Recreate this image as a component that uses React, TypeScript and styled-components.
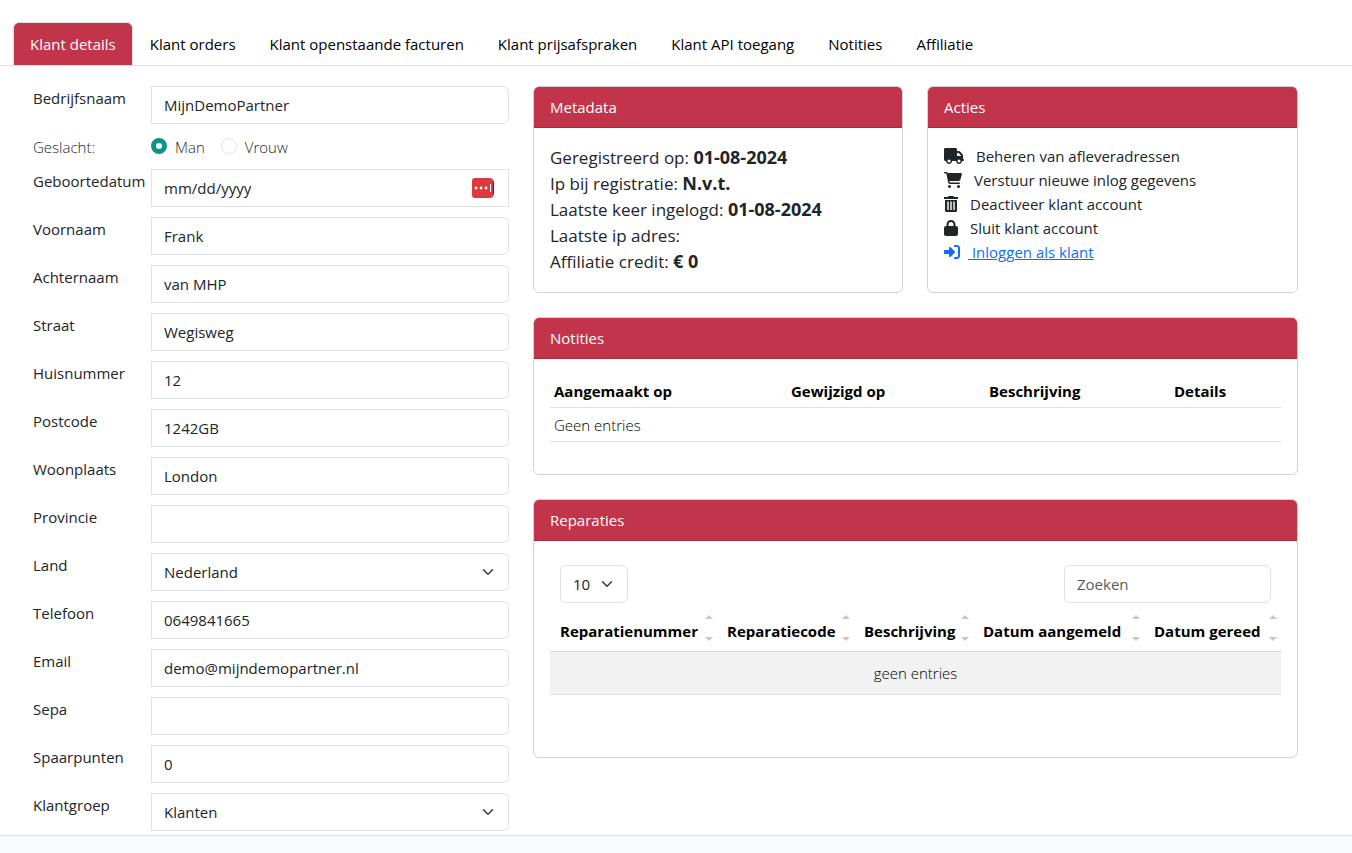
import React from "react";
import styled, { createGlobalStyle } from "styled-components";
import { FaTruck, FaCartShopping, FaLock, FaRightToBracket } from "react-icons/fa6";

const red = "#c23449";
const line = "#dee2e6";
const ink = "#212529";

const GlobalStyle = createGlobalStyle`
  *, *::before, *::after { box-sizing: border-box; }
  body {
    margin: 0;
    background: #fff;
    color: ${ink};
    font-family: "Segoe UI", "Open Sans", "Noto Sans", sans-serif;
    font-size: 15px;
    line-height: 24px;
  }
  input, select, button { font: inherit; color: inherit; }
`;

const Page = styled.div`
  display: flex;
  flex-direction: column;
  min-height: 100vh;
`;

const Tabs = styled.nav`
  display: flex;
  margin-top: 22px;
  padding-left: 13px;
  border-bottom: 1px solid ${line};
`;

const Tab = styled.button<{ $active?: boolean }>`
  height: 43px;
  padding: 0 16px 1px;
  border: 1px solid ${(p) => (p.$active ? line : "transparent")};
  border-bottom: 0;
  border-radius: 6px 6px 0 0;
  background: ${(p) => (p.$active ? red : "transparent")};
  color: ${(p) => (p.$active ? "#fff" : "#000")};
  white-space: nowrap;
  cursor: pointer;
`;

const Main = styled.main`
  display: grid;
  grid-template-columns: minmax(0, 476fr) minmax(0, 765fr);
  column-gap: 24px;
  padding: 20px 54px 4px 33px;
`;

const Form = styled.form`
  display: flex;
  flex-direction: column;
  gap: 10px;
`;

const Field = styled.div`
  display: grid;
  grid-template-columns: 118px minmax(0, 1fr);
  align-items: start;
`;

const RadioField = styled.fieldset`
  display: grid;
  grid-template-columns: 118px minmax(0, 1fr);
  margin: 0;
  padding: 1px 0 0;
  border: 0;
  font-weight: 300;
`;

const Control = styled.input<{ $square?: boolean }>`
  width: 100%;
  height: 38px;
  padding: 0 12px;
  border: 1px solid ${line};
  border-radius: ${(p) => (p.$square ? "0" : "0 6px 6px 0")};
  background: #fff;
  outline: 0;
  &::placeholder { color: ${ink}; opacity: 1; }
`;

const SelectWrap = styled.div`
  position: relative;
`;

const Select = styled.select<{ $rounded?: boolean }>`
  display: block;
  width: 100%;
  height: 38px;
  padding: 0 36px 0 12px;
  border: 1px solid ${line};
  border-radius: ${(p) => (p.$rounded ? "6px" : "0 6px 6px 0")};
  background: #fff;
  appearance: none;
`;

const Chevron = styled.svg`
  position: absolute;
  top: 13px;
  right: 15px;
  width: 12px;
  height: 12px;
  pointer-events: none;
`;

const Badge = styled.svg`
  position: absolute;
  top: 8px;
  right: 14px;
  width: 24px;
  height: 22px;
`;

const RadioGroup = styled.div`
  display: flex;
  gap: 16px;
`;

const RadioLabel = styled.label`
  display: flex;
  align-items: center;
  gap: 8px;
`;

const Radio = styled.input`
  appearance: none;
  width: 16px;
  height: 16px;
  margin: 0 0 2px;
  border: 1px solid ${line};
  border-radius: 50%;
  background: #fff;
  &:checked { border: 5px solid #0d9488; }
`;

const Cards = styled.div`
  display: grid;
  grid-template-columns: 370fr 371fr;
  align-content: start;
  gap: 24px;
`;

const CardBox = styled.section<{ $wide?: boolean }>`
  grid-column: ${(p) => (p.$wide ? "1 / -1" : "auto")};
  min-width: 0;
  border: 1px solid #d0d2d4;
  border-radius: 6px;
  overflow: hidden;
`;

const CardHead = styled.h2`
  margin: 0;
  padding: 8px 16px;
  border-bottom: 1px solid #a52b3d;
  background: ${red};
  color: #fff;
  font-size: 15px;
  font-weight: 400;
  line-height: 24px;
`;

const CardBody = styled.div`
  padding: 16px;
`;

const MetaBody = styled(CardBody)`
  padding: 17px 16px;
`;

const MetaLine = styled.p`
  margin: 0;
  font-size: 17px;
  line-height: 26px;
  strong {
    font-size: 18px;
    font-weight: 700;
    line-height: 18px;
  }
`;

const ActionList = styled.ul`
  margin: 0;
  padding: 0;
  list-style: none;
`;

const Action = styled.a<{ $link?: boolean; $icon: number }>`
  display: flex;
  align-items: center;
  gap: ${(p) => (p.$link ? "8px" : "12px")};
  color: ${(p) => (p.$link ? "#0d6efd" : ink)};
  text-decoration: none;
  svg {
    flex: none;
    width: ${(p) => p.$icon}px;
    height: 16px;
  }
  span {
    white-space: pre;
    text-decoration: ${(p) => (p.$link ? "underline" : "none")};
  }
`;

const NotesTable = styled.table`
  width: 100%;
  margin-bottom: 16px;
  border-collapse: collapse;
  table-layout: fixed;
  th, td {
    padding: 4px;
    border-bottom: 1px solid ${line};
    text-align: left;
  }
  th { color: #000; font-weight: 700; }
  td { padding-top: 5px; color: #000; font-weight: 300; }
`;

const Col = styled.col<{ $w: number }>`
  width: ${(p) => p.$w}px;
`;

const Toolbar = styled.div`
  display: flex;
  justify-content: space-between;
  padding: 8px 10px;
`;

const PageSize = styled(SelectWrap)`
  width: 68px;
`;

const Search = styled.input`
  width: 207px;
  height: 38px;
  padding: 0 12px;
  border: 1px solid ${line};
  border-radius: 6px;
  &::placeholder { color: ${ink}; opacity: 0.75; }
`;

const RepairTable = styled.table`
  width: 100%;
  margin-bottom: 46px;
  border-collapse: collapse;
  table-layout: fixed;
  th {
    padding: 0;
    border-bottom: 1px solid #d4d6d8;
    color: #000;
  }
  td {
    padding: 9px 10px;
    border-bottom: 1px solid ${line};
    background: #f2f2f2;
    color: #000;
    font-weight: 300;
    text-align: center;
  }
`;

const SortButton = styled.button`
  display: flex;
  align-items: center;
  justify-content: space-between;
  width: 100%;
  height: 40px;
  padding: 0 4px 0 10px;
  border: 0;
  background: none;
  color: #000;
  font-weight: 700;
  white-space: nowrap;
  svg { width: 8px; height: 26px; flex: none; margin-bottom: 6px; }
`;

const Footer = styled.footer`
  flex: 1;
  min-height: 18px;
  border-top: 1px solid #dfe3ee;
  background: #f8f9fb;
`;

const Arrow = () => (
  <Chevron viewBox="0 0 16 16" aria-hidden="true">
    <path d="m2 5 6 6 6-6" fill="none" stroke="#343a40" strokeWidth="2" strokeLinecap="round" strokeLinejoin="round" />
  </Chevron>
);

const TrashIcon = () => (
  <svg viewBox="0 0 14 16" fill="currentColor" aria-hidden="true">
    <path d="M4.500 0h5l.5 1h4v2H0V1h4z" />
    <path
      fillRule="evenodd"
      d="M1 4h12v10.500a1.500 1.500 0 0 1-1.500 1.500h-9A1.500 1.500 0 0 1 1 14.500zM3.300 5.500v8.500h1.400V5.500zM6.300 5.500v8.500h1.400V5.500zM9.300 5.500v8.500h1.400V5.500z"
    />
  </svg>
);

type TextFieldProps = { id: string; label: string; value: string };

const TextField = ({ id, label, value }: TextFieldProps) => (
  <Field>
    <label htmlFor={id}>{label}</label>
    <Control id={id} defaultValue={value} />
  </Field>
);

const SelectField = ({ id, label, value }: TextFieldProps) => (
  <Field>
    <label htmlFor={id}>{label}</label>
    <SelectWrap>
      <Select id={id} defaultValue={value}>
        <option>{value}</option>
      </Select>
      <Arrow />
    </SelectWrap>
  </Field>
);

const tabs = [
  "Klant details",
  "Klant orders",
  "Klant openstaande facturen",
  "Klant prijsafspraken",
  "Klant API toegang",
  "Notities",
  "Affiliatie",
];

const metadata = [
  ["Geregistreerd op:", "01-08-2024"],
  ["Ip bij registratie:", "N.v.t."],
  ["Laatste keer ingelogd:", "01-08-2024"],
  ["Laatste ip adres:", ""],
  ["Affiliatie credit:", "€ 0"],
];

const actions = [
  { icon: FaTruck, size: 20, text: "Beheren van afleveradressen" },
  { icon: FaCartShopping, size: 18, text: "Verstuur nieuwe inlog gegevens" },
  { icon: TrashIcon, size: 14, text: "Deactiveer klant account" },
  { icon: FaLock, size: 14, text: "Sluit klant account" },
  { icon: FaRightToBracket, size: 16, text: " Inloggen als klant", link: true },
];

const repairColumns: [string, number][] = [
  ["Reparatienummer", 167],
  ["Reparatiecode", 137],
  ["Beschrijving", 119],
  ["Datum aangemeld", 171],
  ["Datum gereed", 137],
];

export default function App() {
  return (
    <Page>
      <GlobalStyle />
      <Tabs>
        {tabs.map((t, i) => (
          <Tab key={t} type="button" $active={i === 0}>
            {t}
          </Tab>
        ))}
      </Tabs>
      <Main>
        <Form>
          <TextField id="company" label="Bedrijfsnaam" value="MijnDemoPartner" />
          <RadioField aria-labelledby="gender">
            <span id="gender">Geslacht:</span>
            <RadioGroup>
              <RadioLabel>
                <Radio type="radio" name="gender" defaultChecked />
                Man
              </RadioLabel>
              <RadioLabel>
                <Radio type="radio" name="gender" />
                Vrouw
              </RadioLabel>
            </RadioGroup>
          </RadioField>
          <Field>
            <label htmlFor="birthdate">Geboortedatum</label>
            <SelectWrap>
              <Control id="birthdate" placeholder="mm/dd/yyyy" $square />
              <Badge viewBox="0 0 24 22" aria-hidden="true">
                <rect x="3" y="2" width="20" height="18" rx="4" fill="#5a1f22" />
                <rect x="1" y="1" width="21" height="20" rx="3" fill="#dc3a3c" />
                <g fill="#fff">
                  <circle cx="5" cy="11" r="1.400" />
                  <circle cx="10" cy="11" r="1.400" />
                  <circle cx="15" cy="11" r="1.400" />
                  <rect x="19" y="7" width="1" height="8" />
                </g>
              </Badge>
            </SelectWrap>
          </Field>
          <TextField id="first" label="Voornaam" value="Frank" />
          <TextField id="last" label="Achternaam" value="van MHP" />
          <TextField id="street" label="Straat" value="Wegisweg" />
          <TextField id="number" label="Huisnummer" value="12" />
          <TextField id="zip" label="Postcode" value="1242GB" />
          <TextField id="city" label="Woonplaats" value="London" />
          <TextField id="province" label="Provincie" value="" />
          <SelectField id="country" label="Land" value="Nederland" />
          <TextField id="phone" label="Telefoon" value="0649841665" />
          <TextField id="email" label="Email" value="demo@mijndemopartner.nl" />
          <TextField id="sepa" label="Sepa" value="" />
          <TextField id="points" label="Spaarpunten" value="0" />
          <SelectField id="group" label="Klantgroep" value="Klanten" />
        </Form>
        <Cards>
          <CardBox>
            <CardHead>Metadata</CardHead>
            <MetaBody>
              {metadata.map(([k, v]) => (
                <MetaLine key={k}>
                  {k} <strong>{v}</strong>
                </MetaLine>
              ))}
            </MetaBody>
          </CardBox>
          <CardBox>
            <CardHead>Acties</CardHead>
            <CardBody>
              <ActionList>
                {actions.map(({ icon: Icon, size, text, link }) => (
                  <li key={text}>
                    <Action href="#" $link={link} $icon={size}>
                      <Icon aria-hidden="true" />
                      <span>{text}</span>
                    </Action>
                  </li>
                ))}
              </ActionList>
            </CardBody>
          </CardBox>
          <CardBox $wide>
            <CardHead>Notities</CardHead>
            <CardBody>
              <NotesTable>
                <colgroup>
                  <Col $w={237} />
                  <Col $w={198} />
                  <Col $w={185} />
                  <col />
                </colgroup>
                <thead>
                  <tr>
                    <th>Aangemaakt op</th>
                    <th>Gewijzigd op</th>
                    <th>Beschrijving</th>
                    <th>Details</th>
                  </tr>
                </thead>
                <tbody>
                  <tr>
                    <td colSpan={4}>Geen entries</td>
                  </tr>
                </tbody>
              </NotesTable>
            </CardBody>
          </CardBox>
          <CardBox $wide>
            <CardHead>Reparaties</CardHead>
            <CardBody>
              <Toolbar>
                <PageSize>
                  <Select aria-label="Aantal rijen" $rounded defaultValue="10">
                    <option>10</option>
                  </Select>
                  <Arrow />
                </PageSize>
                <Search type="search" placeholder="Zoeken" aria-label="Zoeken" />
              </Toolbar>
              <RepairTable>
                <colgroup>
                  {repairColumns.map(([name, w]) => (
                    <Col key={name} $w={w} />
                  ))}
                </colgroup>
                <thead>
                  <tr>
                    {repairColumns.map(([name]) => (
                      <th key={name}>
                        <SortButton type="button">
                          {name}
                          <svg viewBox="0 0 8 26" aria-hidden="true" fill="#c8c8c8">
                            <path d="M0 4 4 0l4 4zM0 22h8l-4 4z" />
                          </svg>
                        </SortButton>
                      </th>
                    ))}
                  </tr>
                </thead>
                <tbody>
                  <tr>
                    <td colSpan={5}>geen entries</td>
                  </tr>
                </tbody>
              </RepairTable>
            </CardBody>
          </CardBox>
        </Cards>
      </Main>
      <Footer />
    </Page>
  );
}
